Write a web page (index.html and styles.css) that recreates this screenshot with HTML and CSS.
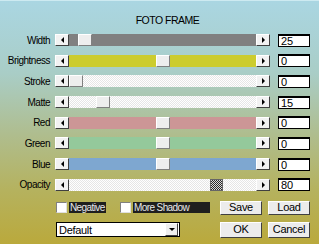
FILE: index.html
```html
<!DOCTYPE html>
<html lang="en">
<head>
    <meta charset="UTF-8">
    <meta name="viewport" content="width=device-width, initial-scale=1.0">
    <title>Foto Frame</title>
    <link rel="stylesheet" href="styles.css">
</head>
<body>

    <div class="dialog">
        <h1 class="title">FOTO FRAME</h1>

        <div class="sliders">
            <div class="row">
                <label class="name">Width</label>
                <div class="scroll">
                    <span class="arrow left"></span>
                    <div class="track gray"><span class="thumb" style="left: 9px;"></span></div>
                    <span class="arrow right"></span>
                </div>
                <input class="val" type="text" value="25">
            </div>
            <div class="row">
                <label class="name">Brightness</label>
                <div class="scroll">
                    <span class="arrow left"></span>
                    <div class="track yellow"><span class="thumb" style="left: 87px;"></span></div>
                    <span class="arrow right"></span>
                </div>
                <input class="val" type="text" value="0">
            </div>
            <div class="row">
                <label class="name">Stroke</label>
                <div class="scroll">
                    <span class="arrow left"></span>
                    <div class="track dither"><span class="thumb" style="left: 0px;"></span></div>
                    <span class="arrow right"></span>
                </div>
                <input class="val" type="text" value="0">
            </div>
            <div class="row">
                <label class="name">Matte</label>
                <div class="scroll">
                    <span class="arrow left"></span>
                    <div class="track dither"><span class="thumb" style="left: 27px;"></span></div>
                    <span class="arrow right"></span>
                </div>
                <input class="val" type="text" value="15">
            </div>
            <div class="row">
                <label class="name">Red</label>
                <div class="scroll">
                    <span class="arrow left"></span>
                    <div class="track red"><span class="thumb" style="left: 87px;"></span></div>
                    <span class="arrow right"></span>
                </div>
                <input class="val" type="text" value="0">
            </div>
            <div class="row">
                <label class="name">Green</label>
                <div class="scroll">
                    <span class="arrow left"></span>
                    <div class="track green"><span class="thumb" style="left: 87px;"></span></div>
                    <span class="arrow right"></span>
                </div>
                <input class="val" type="text" value="0">
            </div>
            <div class="row">
                <label class="name">Blue</label>
                <div class="scroll">
                    <span class="arrow left"></span>
                    <div class="track blue"><span class="thumb" style="left: 87px;"></span></div>
                    <span class="arrow right"></span>
                </div>
                <input class="val" type="text" value="0">
            </div>
            <div class="row">
                <label class="name">Opacity</label>
                <div class="scroll">
                    <span class="arrow left"></span>
                    <div class="track dither"><span class="thumb dark" style="left: 141px;"></span></div>
                    <span class="arrow right"></span>
                </div>
                <input class="val" type="text" value="80">
            </div>
        </div>

        <div class="controls">
            <div class="line">
                <span class="check"></span>
                <span class="check-label">Negative</span>
                <span class="check second"></span>
                <span class="check-label wide">More Shadow</span>
                <div class="buttons">
                    <button class="btn">Save</button>
                    <button class="btn">Load</button>
                </div>
            </div>
            <div class="line">
                <div class="select">
                    <span class="select-text">Default</span>
                    <span class="select-btn"><span class="down"></span></span>
                </div>
                <div class="buttons">
                    <button class="btn tall">OK</button>
                    <button class="btn tall">Cancel</button>
                </div>
            </div>
        </div>
    </div>

</body>
</html>
```

FILE: styles.css
```css
body {
    margin: 0;
    font-family: "Liberation Sans", Arial, sans-serif;
    font-size: 10px;
    color: #000;
}
.dialog {
    width: 319px;
    height: 244px;
    box-sizing: border-box;
    border-top: 1px solid #cdeaf1;
    background: linear-gradient(#aad6e2 0%, #a9cdc6 30%, #afbd8e 55%, #b5b25e 78%, #baa93c 100%);
    overflow: hidden;
}
.title {
    margin: 0;
    padding-top: 13px;
    height: 20px;
    font-size: 10.5px;
    font-weight: normal;
    letter-spacing: -0.5px;
    text-align: center;
    padding-left: 16px;
}
.sliders {
    display: flex;
    flex-direction: column;
    gap: 8.7px;
}
.row {
    display: flex;
    align-items: center;
    height: 12px;
}
.name {
    width: 50px;
    text-align: right;
    letter-spacing: -0.5px;
    margin-right: 5px;
}
.scroll {
    display: flex;
    width: 215px;
    height: 12px;
    margin-right: 8px;
}
.arrow {
    width: 14px;
    height: 12px;
    box-sizing: border-box;
    background: #f2f2f2;
    border: 1px solid;
    border-color: #fff #404040 #404040 #fff;
    display: flex;
    align-items: center;
    justify-content: center;
}
.arrow::before {
    content: "";
    border-top: 3px solid transparent;
    border-bottom: 3px solid transparent;
}
.arrow.left::before {
    border-right: 3px solid #000;
}
.arrow.right::before {
    border-left: 3px solid #000;
}
.track {
    flex: 1;
    position: relative;
}
.track.gray { background: #808080; }
.track.yellow { background: #cccc2e; }
.track.red { background: #cc9696; }
.track.green { background: #94c99b; }
.track.blue { background: #7ea7d0; }
.track.dither {
    background: repeating-conic-gradient(#ffffff 0 25%, #e6e6e6 0 50%) 0 0 / 2px 2px;
}
.thumb {
    position: absolute;
    top: 0;
    width: 14px;
    height: 12px;
    box-sizing: border-box;
    background: #eeeeee;
    border: 1px solid;
    border-color: #fff #808080 #808080 #fff;
}
.thumb.dark {
    width: 13px;
    background: repeating-conic-gradient(#2a2a2a 0 25%, #d8d8d8 0 50%) 0 0 / 2px 2px;
    border-color: #666;
}
.val {
    width: 32px;
    height: 13px;
    box-sizing: border-box;
    border: 1px solid #000;
    border-top-width: 2px;
    background: #fff;
    font-family: "Liberation Sans", Arial, sans-serif;
    font-size: 11px;
    line-height: 10px;
    padding: 0 0 0 2px;
    margin: 0;
    outline: none;
}
.controls {
    margin-top: 10px;
    padding-left: 56px;
    padding-right: 9px;
    display: flex;
    flex-direction: column;
    gap: 7px;
}
.line {
    display: flex;
    align-items: center;
}
.check {
    width: 9px;
    height: 9px;
    background: #fff;
    border: 1px solid;
    border-color: #808080 #e0e0e0 #e0e0e0 #808080;
    margin-right: 2px;
}
.check.second {
    margin-left: 14px;
}
.check-label {
    width: 37px;
    box-sizing: border-box;
    background: #1e1e1e;
    color: #e8e8e8;
    height: 11px;
    line-height: 11px;
    padding: 0 1px;
    letter-spacing: -0.6px;
    white-space: nowrap;
    overflow: hidden;
}
.check-label.wide {
    width: 77px;
}
.buttons {
    margin-left: auto;
    display: flex;
    gap: 6px;
}
.btn {
    width: 42px;
    height: 14px;
    padding: 0;
    box-sizing: border-box;
    background: #ececec;
    border: 1px solid;
    border-color: #fff #404040 #404040 #fff;
    font-family: "Liberation Sans", Arial, sans-serif;
    font-size: 11px;
    line-height: 11px;
    letter-spacing: -0.3px;
    color: #000;
}
.btn.tall {
    height: 16px;
}
.select {
    width: 124px;
    height: 15px;
    box-sizing: border-box;
    border: 1px solid #000;
    background: #fff;
    display: flex;
    align-items: center;
}
.select-text {
    flex: 1;
    padding-left: 2px;
    font-size: 11px;
    letter-spacing: -0.3px;
}
.select-btn {
    width: 13px;
    height: 13px;
    box-sizing: border-box;
    background: #eeeeee;
    border: 1px solid;
    border-color: #fff #404040 #404040 #fff;
    display: flex;
    align-items: center;
    justify-content: center;
    margin-right: 1px;
}
.down {
    border-left: 3px solid transparent;
    border-right: 3px solid transparent;
    border-top: 3px solid #000;
}
```
